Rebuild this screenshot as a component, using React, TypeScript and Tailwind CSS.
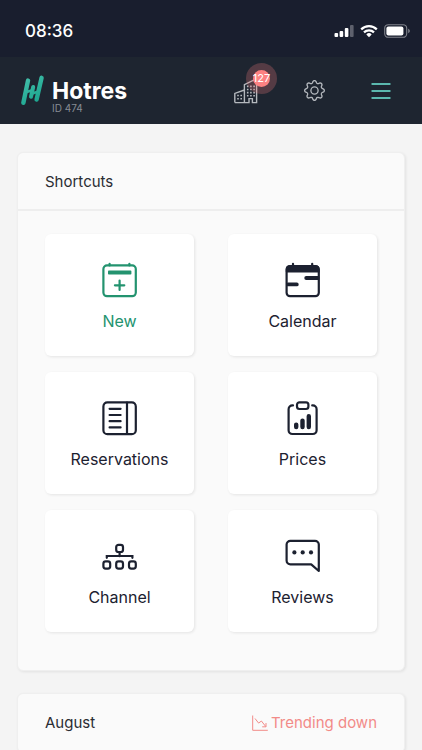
import type { ReactNode } from "react";

const ICON = "h-9 w-9";

function LogoMark() {
  return (
    <svg viewBox="0 0 24 32" className="h-8 w-6 shrink-0" fill="none" strokeLinecap="round" aria-hidden="true">
      <defs>
        <linearGradient id="logo" x1="0" y1="0" x2="24" y2="32" gradientUnits="userSpaceOnUse">
          <stop offset="0" stopColor="#4cc4b0" />
          <stop offset="0.5" stopColor="#2bb09a" />
          <stop offset="1" stopColor="#119c86" />
        </linearGradient>
      </defs>
      <g stroke="url(#logo)" strokeWidth="4.4">
        <path d="M7 5.6 2.4 27.8" />
        <path d="M20.6 2.8 15.6 24.6" />
        <path d="M12.2 12 10 21.8" strokeWidth="4" />
        <path d="M5.6 17l5-1.6M12 18.2l4-1.2" strokeWidth="2.6" />
      </g>
    </svg>
  );
}

function StatusBar() {
  return (
    <div className="flex h-[57px] items-center justify-between bg-[#191e2e] pt-[5px] pr-3 pl-[25px] text-white">
      <span className="text-[17px] leading-6 font-medium">08:36</span>
      <div className="flex items-center gap-[6px]">
        <svg viewBox="0 0 20 14" className="h-[14px] w-5" fill="#fff" aria-hidden="true">
          <rect x="0.5" y="9" width="3.6" height="4" rx="1" />
          <rect x="5.6" y="7" width="3.6" height="6" rx="1" />
          <rect x="10.8" y="4" width="3.6" height="9" rx="1" />
          <rect x="16" y="1" width="3.6" height="12" rx="1" opacity="0.3" />
        </svg>
        <svg viewBox="0 0 18 14" className="h-[14px] w-[18px]" fill="none" stroke="#fff" strokeWidth="2.2" aria-hidden="true">
          <path d="M1.2 5.4a11 11 0 0 1 15.6 0" />
          <path d="M4 8.4a7.1 7.1 0 0 1 10 0" />
          <path d="M6.3 10.4a3.9 3.9 0 0 1 5.4 0L9 13.2Z" fill="#fff" stroke="none" />
        </svg>
        <svg viewBox="0 0 26 14" className="h-[14px] w-[26px]" fill="none" aria-hidden="true">
          <rect x="0.7" y="0.7" width="22" height="12.6" rx="3.6" stroke="#80838c" strokeWidth="1.1" />
          <rect x="2.4" y="2.5" width="17" height="9" rx="2" fill="#fff" />
          <path d="M24.2 4.8v4.4c1-.4 1.6-1.2 1.6-2.2s-.6-1.8-1.6-2.2Z" fill="#80838c" />
        </svg>
      </div>
    </div>
  );
}

function BuildingsIcon() {
  return (
    <svg viewBox="0 0 24 26" className="h-[26px] w-6" fill="none" stroke="#b4b8bd" strokeWidth="1.4" aria-hidden="true">
      <path d="M.8 24.6V15.4L10.4 12M10.4 24.6V6.6L22.6.8V24.6H18.4V20.6H15v4H.8" />
      <g strokeWidth="1.6" strokeDasharray="1.6 1.6">
        <path d="M3.2 17.5h5.4M3.2 20.8h5.4M12.9 8.4h8.6M12.9 11.5h8.6M12.9 14.6h8.6M12.9 17.7h8.6" />
      </g>
    </svg>
  );
}

function GearIcon() {
  return (
    <svg viewBox="0 0 16 16" className="h-[21px] w-[21px]" fill="#b4b8bd" aria-hidden="true">
      <path d="M8 4.754a3.246 3.246 0 1 0 0 6.492 3.246 3.246 0 0 0 0-6.492zM5.754 8a2.246 2.246 0 1 1 4.492 0 2.246 2.246 0 0 1-4.492 0z" />
      <path d="M9.796 1.343c-.527-1.79-3.065-1.79-3.592 0l-.094.319a.873.873 0 0 1-1.255.52l-.292-.16c-1.64-.892-3.433.902-2.54 2.541l.159.292a.873.873 0 0 1-.52 1.255l-.319.094c-1.79.527-1.79 3.065 0 3.592l.319.094a.873.873 0 0 1 .52 1.255l-.16.292c-.892 1.64.901 3.434 2.541 2.54l.292-.159a.873.873 0 0 1 1.255.52l.094.319c.527 1.79 3.065 1.79 3.592 0l.094-.319a.873.873 0 0 1 1.255-.52l.292.16c1.64.893 3.434-.902 2.54-2.541l-.159-.292a.873.873 0 0 1 .52-1.255l.319-.094c1.79-.527 1.79-3.065 0-3.592l-.319-.094a.873.873 0 0 1-.52-1.255l.16-.292c.893-1.64-.902-3.433-2.541-2.54l-.292.159a.873.873 0 0 1-1.255-.52l-.094-.319zm-2.633.283c.246-.835 1.428-.835 1.674 0l.094.319a1.873 1.873 0 0 0 2.693 1.115l.291-.16c.764-.415 1.6.42 1.184 1.185l-.159.292a1.873 1.873 0 0 0 1.116 2.692l.318.094c.835.246.835 1.428 0 1.674l-.319.094a1.873 1.873 0 0 0-1.115 2.693l.16.291c.415.764-.42 1.6-1.185 1.184l-.291-.159a1.873 1.873 0 0 0-2.693 1.116l-.094.318c-.246.835-1.428.835-1.674 0l-.094-.319a1.873 1.873 0 0 0-2.692-1.115l-.292.16c-.764.415-1.6-.42-1.184-1.185l.159-.291A1.873 1.873 0 0 0 1.945 8.93l-.319-.094c-.835-.246-.835-1.428 0-1.674l.319-.094A1.873 1.873 0 0 0 3.06 4.377l-.16-.292c-.415-.764.42-1.6 1.185-1.184l.292.159a1.873 1.873 0 0 0 2.692-1.115l.094-.319z" />
    </svg>
  );
}

function AppHeader() {
  return (
    <header className="flex h-[67px] items-center justify-between bg-[#1e2530] pr-[31px] pl-[21px]">
      <a href="#home" className="flex items-center gap-[7px]">
        <LogoMark />
        <span className="flex flex-col pt-[10px]">
          <span className="text-[23px] leading-6 font-bold text-white">Hotres</span>
          <span className="text-[10px] leading-[10px] text-[#878c94]">ID 474</span>
        </span>
      </a>
      <div className="flex items-center gap-[46px]">
        <button type="button" aria-label="Properties" className="relative">
          <BuildingsIcon />
          <span className="absolute -top-[15px] left-3 flex h-[31px] w-[31px] items-center justify-center rounded-full bg-[#fc8181]/25">
            <span className="flex h-[17px] w-[17px] items-center justify-center rounded-full bg-[#fc8181] text-[11px] leading-none text-white">
              127
            </span>
          </span>
        </button>
        <button type="button" aria-label="Settings">
          <GearIcon />
        </button>
        <button type="button" aria-label="Menu">
          <svg viewBox="0 0 20 18" className="h-[18px] w-5" stroke="#5bb8ae" strokeWidth="1.8" strokeLinecap="round" aria-hidden="true">
            <path d="M1.2 2h17.6M1.2 9h17.6M1.2 16h17.6" />
          </svg>
        </button>
      </div>
    </header>
  );
}

const shortcuts: { label: string; accent?: boolean; icon: ReactNode }[] = [
  {
    label: "New",
    accent: true,
    icon: (
      <svg viewBox="0 0 36 36" className={ICON} fill="none" stroke="currentColor" strokeWidth="2.2" strokeLinecap="round" aria-hidden="true">
        <rect x="1.4" y="3.4" width="32.4" height="30.8" rx="3.6" />
        <path d="M7.6 1.8v1.6M27.4 1.8v1.6M17.6 18.6v9.4M12.9 23.3h9.4" />
        <rect x="6" y="8.6" width="23.4" height="4" rx="0.8" fill="currentColor" stroke="none" />
      </svg>
    ),
  },
  {
    label: "Calendar",
    icon: (
      <svg viewBox="0 0 36 36" className={ICON} fill="none" stroke="currentColor" strokeWidth="2.2" strokeLinecap="round" aria-hidden="true">
        <rect x="1.6" y="4" width="32.2" height="30.2" rx="3.4" />
        <path d="M8 1.8v2M27.2 1.8v2" />
        <path d="M1.6 9.8V7.2a3.2 3.2 0 0 1 3.2-3.2h25.8a3.2 3.2 0 0 1 3.2 3.2V9.8Z" fill="currentColor" strokeLinejoin="round" strokeWidth="1.6" />
        <path d="M21.2 16h11.4M3 22.4h8.8" strokeWidth="3.8" />
      </svg>
    ),
  },
  {
    label: "Reservations",
    icon: (
      <svg viewBox="0 0 36 36" className={ICON} fill="none" stroke="currentColor" strokeWidth="2.2" strokeLinecap="round" aria-hidden="true">
        <rect x="1.4" y="2.4" width="32.4" height="31.8" rx="4" />
        <path d="M25 2.6v31.4" />
        <path d="M7.6 8.8h11M7.6 15h11M7.6 21.2h11M7.6 27.4h11" />
      </svg>
    ),
  },
  {
    label: "Prices",
    icon: (
      <svg viewBox="0 0 36 36" className={ICON} fill="none" stroke="currentColor" strokeWidth="2.2" strokeLinecap="round" aria-hidden="true">
        <path d="M8 5.4h-.6a3.8 3.8 0 0 0-3.8 3.8V30.2a3.8 3.8 0 0 0 3.8 3.8h20.4a3.8 3.8 0 0 0 3.8-3.8V9.2a3.8 3.8 0 0 0-3.8-3.8h-.6" />
        <rect x="12" y="2.4" width="11.4" height="6.6" rx="2.4" />
        <path d="M11.2 24.6v2.4M17.5 20.6v6.4M23.8 16.2V27" strokeWidth="4.4" />
      </svg>
    ),
  },
  {
    label: "Channel",
    icon: (
      <svg viewBox="0 0 36 36" className={ICON} fill="none" stroke="currentColor" strokeWidth="2.2" strokeLinecap="round" aria-hidden="true">
        <rect x="14.2" y="6.8" width="6.8" height="7.2" rx="2.3" />
        <rect x="1.4" y="23.4" width="6.8" height="7.2" rx="2.3" />
        <rect x="14.2" y="23.4" width="6.8" height="7.2" rx="2.3" />
        <rect x="27" y="23.4" width="6.8" height="7.2" rx="2.3" />
        <path d="M17.6 14.2v4M4.8 19.8v-1.8h25.6v1.8" />
      </svg>
    ),
  },
  {
    label: "Reviews",
    icon: (
      <svg viewBox="0 0 36 36" className={ICON} fill="none" stroke="currentColor" strokeWidth="2.2" strokeLinejoin="round" aria-hidden="true">
        <path d="M5.4 2.8h24.6a3.8 3.8 0 0 1 3.8 3.8v26.4l-7.6-6.6H5.4a3.8 3.8 0 0 1-3.8-3.8V6.6a3.8 3.8 0 0 1 3.8-3.8Z" />
        <g fill="currentColor" stroke="none">
          <circle cx="9.4" cy="14.4" r="2.1" />
          <circle cx="17.7" cy="14.4" r="2.1" />
          <circle cx="26" cy="14.4" r="2.1" />
        </g>
      </svg>
    ),
  },
];

function Card({ title, aside, children }: { title: string; aside?: ReactNode; children?: ReactNode }) {
  return (
    <section className="rounded-md border border-[#efefef] bg-[#fafafa] shadow-[1px_1px_3px_rgba(0,0,0,0.08)]">
      <div className="flex h-[58px] items-center justify-between border-b-2 border-[#eeeeee] px-[27px] pt-px text-[15px] leading-6">
        <h2 className="text-[#2b2d33]">{title}</h2>
        {aside}
      </div>
      {children}
    </section>
  );
}

export default function App() {
  return (
    <div className="h-screen overflow-hidden bg-[#f4f4f4] font-['Inter','Liberation_Sans',sans-serif]">
      <StatusBar />
      <AppHeader />
      <main className="flex flex-col gap-[22px] px-[17px] pt-7">
        <Card title="Shortcuts">
          <div className="grid grid-cols-2 gap-x-[34px] gap-y-4 px-[27px] pt-[23px] pb-[38px]">
            {shortcuts.map((item) => (
              <button
                key={item.label}
                type="button"
                className={`flex flex-col items-center gap-[11px] rounded-md bg-white pt-7 pb-[23px] shadow-[1px_1px_3px_rgba(0,0,0,0.09)] ${
                  item.accent ? "text-[#23936f]" : "text-[#1c2130]"
                }`}
              >
                {item.icon}
                <span className="text-[16px] leading-6">{item.label}</span>
              </button>
            ))}
          </div>
        </Card>
        <Card
          title="August"
          aside={
            <span className="flex items-center gap-[3px] text-[#f28b88]">
              <svg viewBox="0 0 16 16" className="h-4 w-4" fill="none" stroke="currentColor" aria-hidden="true">
                <path d="M.7.5v14.8H15.8" />
                <path d="M3 3.5l3.6 4.6L9.4 6l4.4 5.6M10.2 11.8h3.8V8" strokeLinejoin="round" />
              </svg>
              Trending down
            </span>
          }
        />
      </main>
    </div>
  );
}
